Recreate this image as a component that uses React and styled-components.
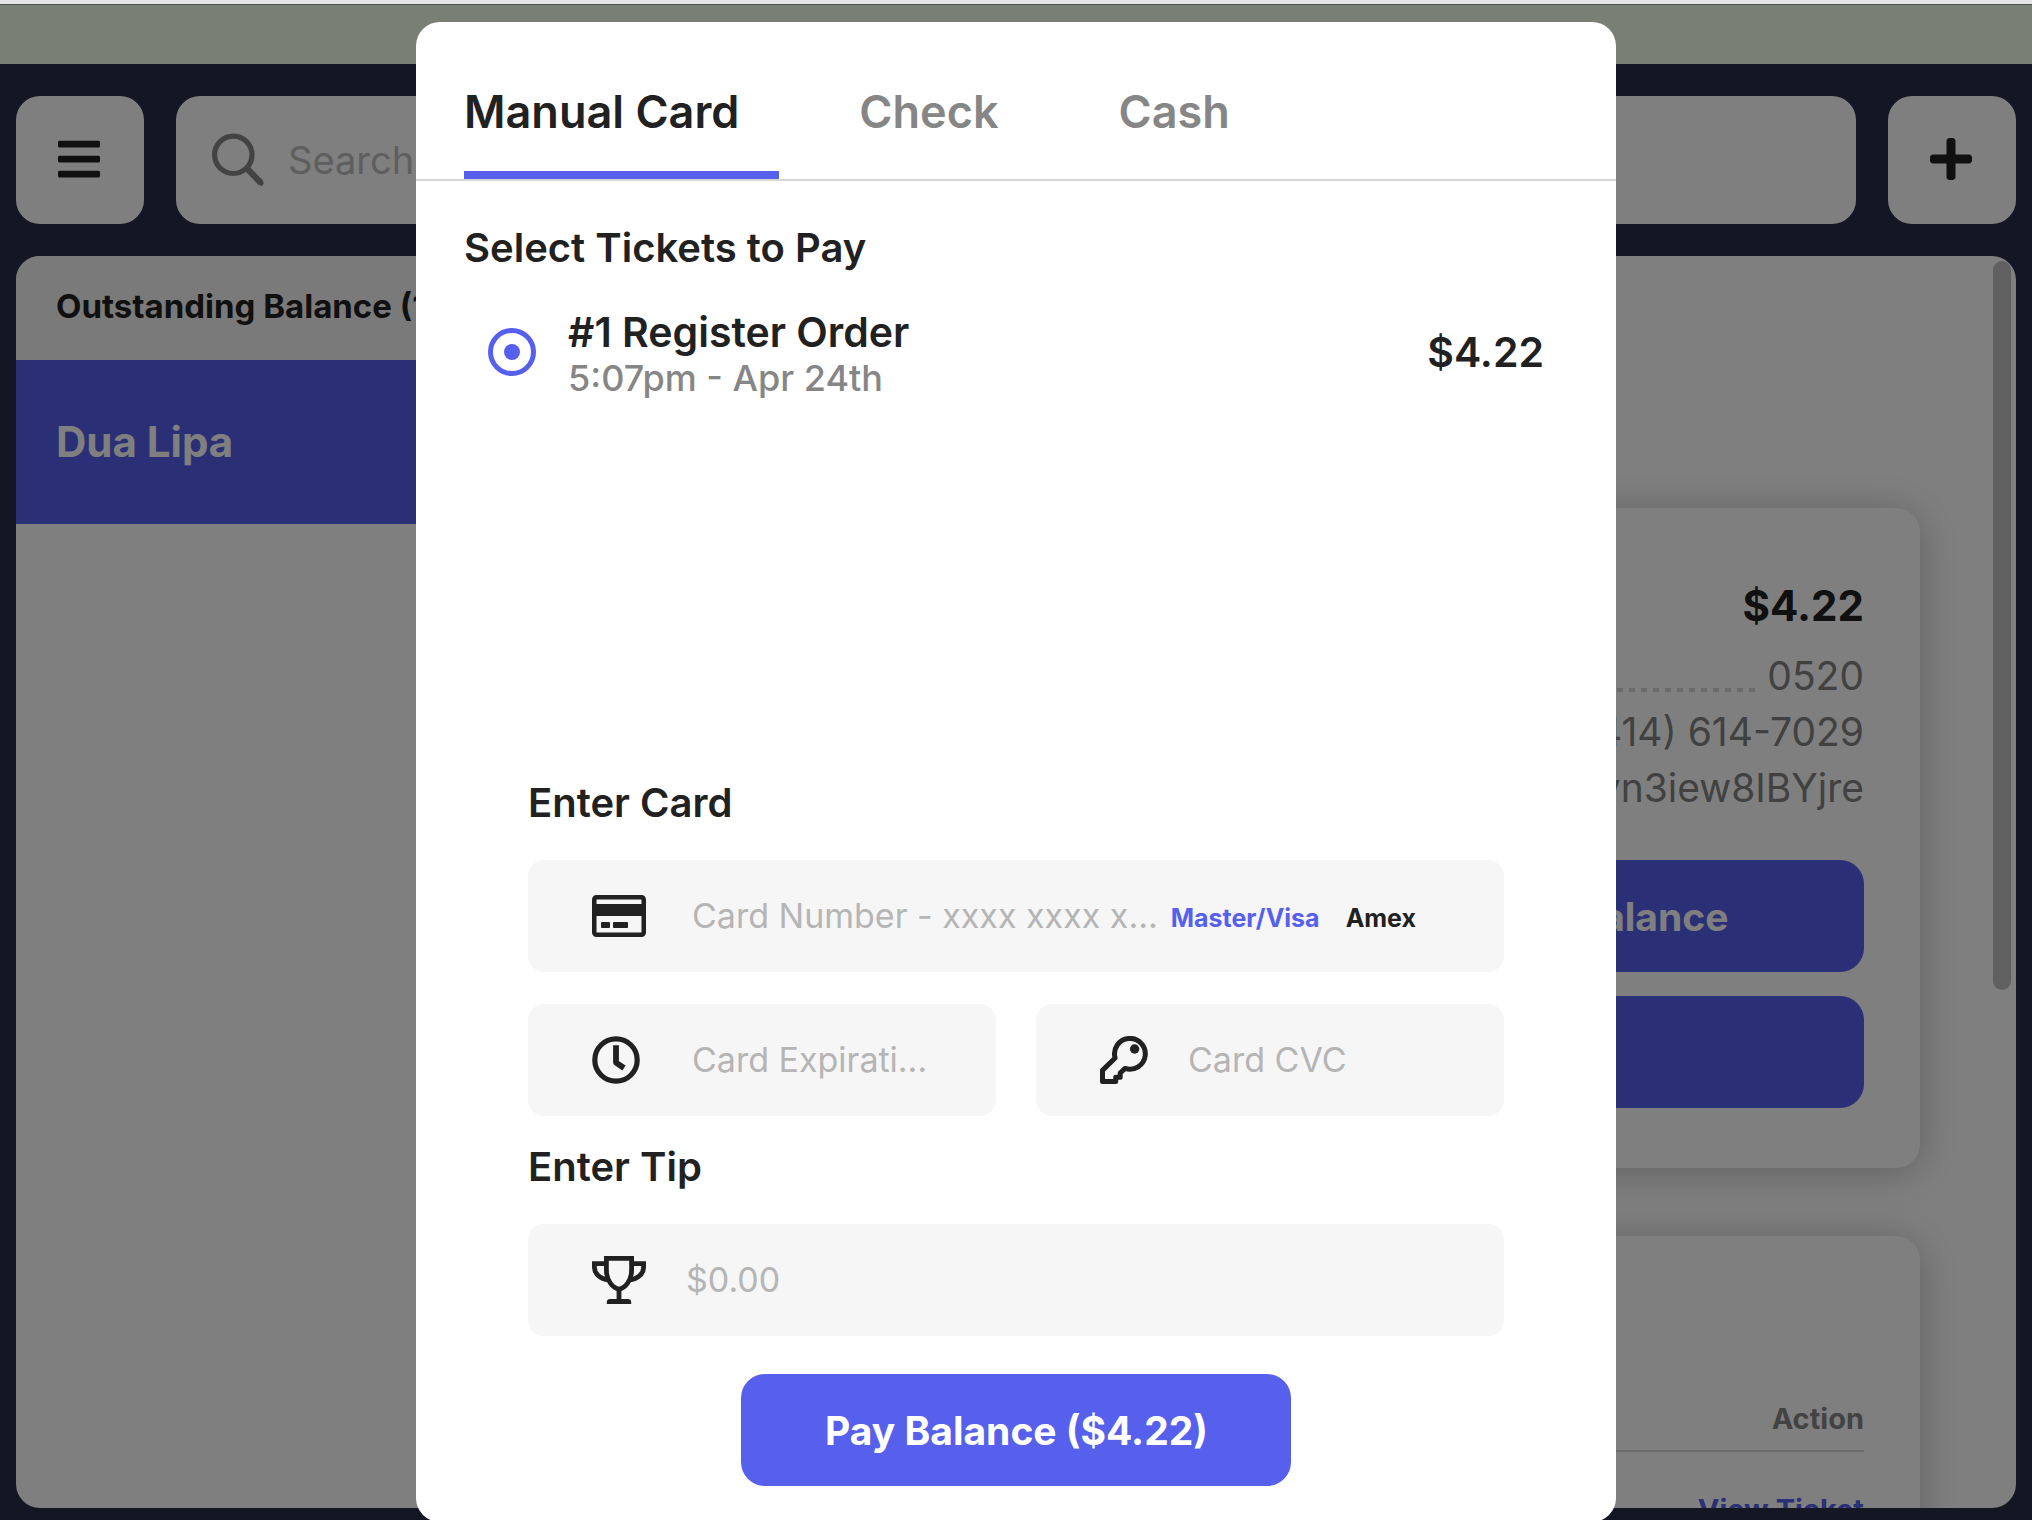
import React, { useState } from 'react';
import styled, { createGlobalStyle, css, ThemeProvider } from 'styled-components';
import { FaBars, FaPlus, FaRegCreditCard } from 'react-icons/fa';

const theme = {
  navy: '#282c48',
  accent: '#5760ed',
  ink: '#212121',
  muted: '#868686',
  surface: '#ffffff',
  field: '#f6f6f6',
  band: '#f5f5f5',
  rule: '#d6d6d6',
};

const GlobalStyle = createGlobalStyle`
  *, *::before, *::after { box-sizing: border-box; }
  html, body, #root { height: 100%; }
  body {
    margin: 0;
    overflow: hidden;
    font-family: Inter, "Liberation Sans", sans-serif;
    color: ${theme.ink};
    -webkit-font-smoothing: antialiased;
  }
  h1, h2, p { margin: 0; }
  button, input { font-family: inherit; }
  button { cursor: pointer; }
`;

/* ---------- page behind the dialog ---------- */

const Page = styled.div`
  height: 100%;
  display: flex;
  flex-direction: column;
  background: ${p => p.theme.navy};
`;

const WindowEdge = styled.div`
  flex: none;
  height: 4px;
  background: #e6e6e9;
`;

const StatusBar = styled.div`
  flex: none;
  height: 60px;
  background: #f4ffec;
  border-top: 1px solid #aaaaa6;
`;

const Toolbar = styled.header`
  flex: none;
  display: flex;
  gap: 32px;
  padding: 32px 16px;
`;

const tile = css`
  height: 128px;
  border: 0;
  border-radius: 24px;
  background: ${p => p.theme.surface};
`;

const IconButton = styled.button`
  ${tile}
  flex: none;
  width: 128px;
  display: flex;
  align-items: center;
  justify-content: center;
  padding: 0 2px 2px 0;
  color: ${p => p.theme.ink};

  svg { width: 42px; height: 48px; }
`;

const SearchBox = styled.div`
  ${tile}
  flex: 1;
  display: flex;
  align-items: center;
  gap: 22px;
  padding: 0 36px;

  label { display: flex; color: ${p => p.theme.muted}; }
`;

const SearchInput = styled.input`
  flex: 1;
  min-width: 0;
  padding: 0;
  border: 0;
  outline: 0;
  background: none;
  font-size: 38px;
  line-height: 56px;
  color: ${p => p.theme.ink};

  &::placeholder { color: #bdbdbd; opacity: 1; }
`;

const Panel = styled.main`
  flex: 1;
  min-height: 0;
  display: grid;
  grid-template-columns: 1fr 2fr;
  margin: 0 16px 12px;
  border-radius: 24px;
  overflow: hidden;
  background: ${p => p.theme.surface};
`;

const Sidebar = styled.aside`
  display: flex;
  flex-direction: column;
`;

const GroupTitle = styled.h2`
  height: 104px;
  padding: 28px 40px;
  background: ${p => p.theme.band};
  font-size: 33px;
  font-weight: 700;
  line-height: 44px;
`;

const CustomerButton = styled.button`
  padding: 54px 40px;
  border: 0;
  background: ${p => p.theme.accent};
  color: #fff;
  font-size: 42px;
  font-weight: 700;
  line-height: 56px;
  text-align: left;
`;

const Details = styled.section`
  position: relative;
  min-width: 0;
  overflow: hidden;
  display: flex;
  flex-direction: column;
  gap: 68px;
  padding: 252px 96px 0;
`;

const ScrollThumb = styled.div`
  position: absolute;
  top: 5px;
  right: 5px;
  width: 18px;
  height: 729px;
  border-radius: 9px;
  background: #c0c0c0;
`;

const Card = styled.section`
  flex: none;
  padding: 70px 56px 60px;
  border-radius: 24px;
  background: ${p => p.theme.surface};
  box-shadow: 0 4px 40px rgba(0, 0, 0, 0.25);
`;

const CardHead = styled.div`
  display: flex;
  justify-content: space-between;
  margin-bottom: 14px;
  font-size: 42px;
  font-weight: 700;
  line-height: 56px;
`;

const InfoRow = styled.div`
  display: flex;
  align-items: flex-end;
  gap: 12px;
  font-size: 39px;
  line-height: 56px;
  color: #828282;
`;

const Leader = styled.span`
  flex: 1;
  height: 4px;
  margin-bottom: 12px;
  background: repeating-linear-gradient(to left, #d6d6d6 0 6px, transparent 6px 12px);
`;

const ActionGrid = styled.div`
  display: grid;
  grid-template-columns: 1fr 1fr;
  gap: 24px;
  margin-top: 44px;
`;

const PrimaryButton = styled.button`
  height: 112px;
  padding: 0 84px;
  border: 0;
  border-radius: 24px;
  background: ${p => p.theme.accent};
  color: #fff;
  font-size: 39px;
  font-weight: 700;
  white-space: nowrap;
  grid-column: ${p => (p.$wide ? '1 / -1' : 'auto')};
`;

const TicketTable = styled.table`
  width: 100%;
  border-collapse: collapse;
  font-size: 29px;
  line-height: 36px;
  text-align: right;

  th {
    padding: 25px 0 13px;
    border-bottom: 2px solid ${p => p.theme.rule};
    color: ${p => p.theme.muted};
    font-weight: 700;
  }
  td { padding: 40px 0; }
  a {
    color: ${p => p.theme.accent};
    font-weight: 700;
    text-decoration: none;
  }
`;

/* ---------- payment dialog ---------- */

const Overlay = styled.div`
  position: fixed;
  inset: 4px 0 0;
  display: flex;
  justify-content: center;
  align-items: flex-start;
  padding-top: 18px;
  overflow: hidden;
  background: rgba(0, 0, 0, 0.5);
`;

const Dialog = styled.div`
  flex: none;
  width: 1200px;
  max-width: 100%;
  padding-bottom: 36px;
  border-radius: 24px;
  background: ${p => p.theme.surface};
`;

const Tabs = styled.div`
  display: flex;
  gap: 80px;
  padding: 0 48px;
  border-bottom: 2px solid ${p => p.theme.rule};
`;

const Tab = styled.button`
  padding: 62px 40px 31px 0;
  border: 0;
  border-bottom: 8px solid ${p => (p.$active ? p.theme.accent : 'transparent')};
  background: none;
  color: ${p => (p.$active ? p.theme.ink : p.theme.muted)};
  font-size: 45px;
  font-weight: 600;
  line-height: 56px;
`;

const Heading = styled.h2`
  font-size: 40px;
  font-weight: 600;
  line-height: 50px;
`;

const Tickets = styled.section`
  display: flex;
  flex-direction: column;
  gap: 30px;
  min-height: 597px;
  padding: 42px 48px 0;
`;

const TicketRow = styled.label`
  display: flex;
  align-items: center;
  gap: 32px;
  padding: 0 24px;
  font-size: 41px;
  font-weight: 600;
  line-height: 46px;
`;

const TicketText = styled.span`
  flex: 1;
  display: flex;
  flex-direction: column;
  padding-top: 6px;
`;

const TicketTime = styled.span`
  font-size: 36px;
  font-weight: 500;
  color: ${p => p.theme.muted};
`;

const Radio = styled.input`
  appearance: none;
  flex: none;
  display: grid;
  place-items: center;
  width: 48px;
  height: 48px;
  margin: 0;
  border: 5px solid ${p => p.theme.accent};
  border-radius: 50%;

  &:checked::before {
    content: '';
    width: 16px;
    height: 16px;
    border-radius: 50%;
    background: ${p => p.theme.accent};
  }
`;

const Form = styled.form`
  display: flex;
  flex-direction: column;
  padding: 0 112px;
`;

const FormGroup = styled.div`
  display: grid;
  grid-template-columns: 1fr 1fr;
  gap: 32px 40px;
  margin-bottom: ${p => p.$after}px;
`;

const FormHeading = styled(Heading)`
  grid-column: 1 / -1;
`;

const Field = styled.div`
  grid-column: ${p => (p.$wide ? '1 / -1' : 'auto')};
  min-width: 0;
  height: 112px;
  display: flex;
  align-items: center;
  padding: 0 ${p => p.$end || 64}px 0 64px;
  border-radius: 16px;
  background: ${p => p.theme.field};
`;

const FieldIcon = styled.label`
  flex: none;
  display: flex;
  width: ${p => p.$slot}px;
  margin-right: 40px;
`;

const CreditCardIcon = styled(FaRegCreditCard)`
  width: 54px;
  height: 48px;
`;

const FieldInput = styled.input`
  flex: 1;
  min-width: 0;
  padding: 0;
  border: 0;
  outline: 0;
  background: none;
  color: ${p => p.theme.ink};
  font-size: 34px;
  line-height: 48px;
  text-overflow: ellipsis;

  &::placeholder { color: #b5b5b5; opacity: 1; text-overflow: ellipsis; }
`;

const Networks = styled.div`
  flex: none;
  display: flex;
  gap: 26px;
  padding: 4px 0 0 8px;
`;

const NetworkButton = styled.button`
  padding: 0;
  border: 0;
  background: none;
  color: ${p => (p.$active ? p.theme.accent : p.theme.ink)};
  font-size: 25px;
  font-weight: 700;
  line-height: 32px;
`;

const Submit = styled(PrimaryButton)`
  align-self: center;
  width: 550px;
`;

/* ---------- icons ---------- */

const SearchIcon = () => (
  <svg width="54" height="54" viewBox="0 0 54 54" fill="none" stroke="currentColor">
    <circle cx="21.3" cy="21.8" r="18.7" strokeWidth="5.2" />
    <path d="M35 35.5 49 50" strokeWidth="6.2" />
    <path d="M48.6 49.6l.6.6" strokeWidth="5" strokeLinecap="round" />
  </svg>
);

const ClockIcon = () => (
  <svg width="48" height="48" viewBox="0 0 48 48" fill="none" stroke="currentColor" strokeWidth="5.2">
    <circle cx="24" cy="24" r="21.2" />
    <path d="M24 9.2V26.6l8 5.4" strokeWidth="5.8" strokeLinejoin="round" />
  </svg>
);

const KeyIcon = () => (
  <svg width="48" height="48" viewBox="0 0 48 48" fill="none" stroke="currentColor" strokeWidth="5" strokeLinejoin="round">
    <path d="M15.1 22 2.5 34.4V45.5H15.7V41.2H20.2V37L25 32.4A15.4 15.4 0 1 0 15.1 22Z" />
    <circle cx="34.6" cy="13" r="4.7" fill="currentColor" stroke="none" />
  </svg>
);

const TrophyIcon = () => (
  <svg width="54" height="48" viewBox="0 0 54 48" fill="none" stroke="currentColor" strokeWidth="4.8">
    <path d="M14.4 2.4H39.6V14C39.6 24 34 31.6 27 33.2 20 31.6 14.4 24 14.4 14Z" />
    <path d="M14.4 7.6H2.4V11.6C2.4 17.6 8 22.6 15.6 24" />
    <path d="M39.6 7.6H51.6V11.6C51.6 17.6 46 22.6 38.4 24" />
    <path d="M27 33V45" />
    <path d="M14.8 48V46.4a3.4 3.4 0 0 1 3.4-3.4H35.8a3.4 3.4 0 0 1 3.4 3.4V48Z" fill="currentColor" stroke="none" />
  </svg>
);

/* ---------- sections ---------- */

const TABS = ['Manual Card', 'Check', 'Cash'];
const NETWORKS = ['Master/Visa', 'Amex'];
const INFO = [
  ['Customer ID', '0520'],
  ['Phone', '(414) 614-7029'],
  ['Reference', 'yn3iew8IBYjre'],
];

function CustomerPage() {
  return (
    <>
      <Toolbar>
        <IconButton aria-label="Menu"><FaBars /></IconButton>
        <SearchBox>
          <label htmlFor="search"><SearchIcon /></label>
          <SearchInput id="search" aria-label="Search" placeholder="Search" />
        </SearchBox>
        <IconButton aria-label="Add customer"><FaPlus /></IconButton>
      </Toolbar>
      <Panel>
        <Sidebar>
          <GroupTitle>Outstanding Balance (1)</GroupTitle>
          <CustomerButton>Dua Lipa</CustomerButton>
        </Sidebar>
        <Details>
          <Card>
            <CardHead><span>Balance</span><span>$4.22</span></CardHead>
            {INFO.map(([label, value]) => (
              <InfoRow key={label}><span>{label}</span><Leader /><span>{value}</span></InfoRow>
            ))}
            <ActionGrid>
              <PrimaryButton>Add Ticket</PrimaryButton>
              <PrimaryButton>Pay Balance</PrimaryButton>
              <PrimaryButton $wide>Edit Info</PrimaryButton>
            </ActionGrid>
          </Card>
          <Card>
            <CardHead>Tickets</CardHead>
            <TicketTable>
              <thead><tr><th>Action</th></tr></thead>
              <tbody><tr><td><a href="#ticket-1">View Ticket</a></td></tr></tbody>
            </TicketTable>
          </Card>
          <ScrollThumb />
        </Details>
      </Panel>
    </>
  );
}

function PaymentDialog() {
  const [tab, setTab] = useState(TABS[0]);
  const [network, setNetwork] = useState(NETWORKS[0]);
  return (
    <Overlay>
      <Dialog role="dialog" aria-label="Pay balance">
        <Tabs role="tablist">
          {TABS.map(name => (
            <Tab key={name} role="tab" aria-selected={tab === name} $active={tab === name} onClick={() => setTab(name)}>
              {name}
            </Tab>
          ))}
        </Tabs>
        <Tickets>
          <Heading>Select Tickets to Pay</Heading>
          <TicketRow>
            <Radio type="radio" name="ticket" defaultChecked />
            <TicketText>
              <span>#1 Register Order</span>
              <TicketTime>5:07pm - Apr 24th</TicketTime>
            </TicketText>
            <span>$4.22</span>
          </TicketRow>
        </Tickets>
        <Form onSubmit={e => e.preventDefault()}>
          <FormGroup $after={26}>
            <FormHeading>Enter Card</FormHeading>
            <Field $wide $end={88}>
              <FieldIcon htmlFor="number" $slot={60}><CreditCardIcon /></FieldIcon>
              <FieldInput id="number" aria-label="Card number" placeholder="Card Number - xxxx xxxx xxxx xxxx" />
              <Networks>
                {NETWORKS.map(name => (
                  <NetworkButton key={name} type="button" $active={network === name} onClick={() => setNetwork(name)}>
                    {name}
                  </NetworkButton>
                ))}
              </Networks>
            </Field>
            <Field>
              <FieldIcon htmlFor="expiration" $slot={60}><ClockIcon /></FieldIcon>
              <FieldInput id="expiration" aria-label="Card expiration" placeholder="Card Expiration" />
            </Field>
            <Field>
              <FieldIcon htmlFor="cvc" $slot={48}><KeyIcon /></FieldIcon>
              <FieldInput id="cvc" aria-label="Card CVC" placeholder="Card CVC" />
            </Field>
          </FormGroup>
          <FormGroup $after={38}>
            <FormHeading>Enter Tip</FormHeading>
            <Field $wide>
              <FieldIcon htmlFor="tip" $slot={54}><TrophyIcon /></FieldIcon>
              <FieldInput id="tip" aria-label="Tip" placeholder="$0.00" />
            </Field>
          </FormGroup>
          <Submit type="submit">Pay Balance ($4.22)</Submit>
        </Form>
      </Dialog>
    </Overlay>
  );
}

export default function App() {
  return (
    <ThemeProvider theme={theme}>
      <GlobalStyle />
      <Page>
        <WindowEdge />
        <StatusBar />
        <CustomerPage />
      </Page>
      <PaymentDialog />
    </ThemeProvider>
  );
}
